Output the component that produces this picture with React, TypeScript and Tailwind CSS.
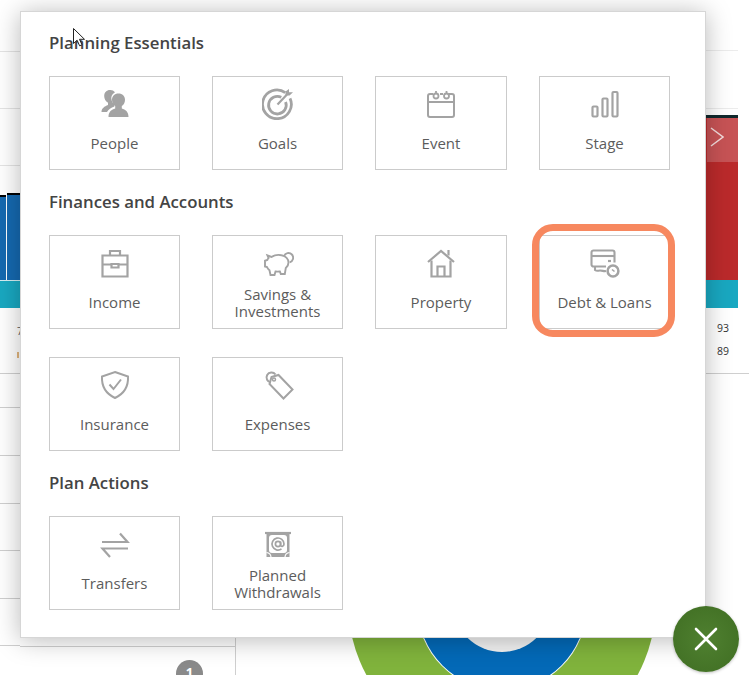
const line = 'stroke-[#a3a3a3]';

function Icon({ children }: { children: React.ReactNode }) {
  return (
    <svg viewBox="0 0 32 32" className={`h-8 w-8 shrink-0 fill-none ${line}`} strokeWidth="2">
      {children}
    </svg>
  );
}

const icons: Record<string, React.ReactNode> = {
  people: (
    <g fill="#a3a3a3" stroke="none">
      <path d="M11 2a6 6 0 0 1 5 2.2 7.2 7.2 0 0 0-3.2 8.6c.6 1.8 1.6 3 2.6 3.8v1.8c-3.4 1-6 3-7.400 5.600H2.500c0-3.400 3-5.600 6.500-6.900v-2.300C6.600 13.300 5.200 11 5.200 8 5.200 4.400 7.600 2 11 2z" />
      <path d="M19.500 5.500c3.900 0 6.500 2.700 6.500 6.300 0 2.800-1.300 5-3.200 6.300v2.500c3.500 1.100 6.700 3 6.700 8.400H9.500c0-5.400 3.200-7.300 6.700-8.400v-2.500C14.300 16.800 13 14.600 13 11.800c0-3.600 2.600-6.300 6.500-6.300z" />
    </g>
  ),
  goals: (
    <g>
      <path d="M23.300 4.600A14.400 14.400 0 1 0 28 10.300" strokeWidth="2.800" />
      <path d="M19.300 9.300A8.800 8.800 0 1 0 23.600 14" strokeWidth="2.800" />
      <path d="M15.500 16.500 25 6.500" strokeWidth="2.200" />
      <path d="M23.500 7.500V3.500L27 1v3.300L31 4.300 27.500 7.500z" fill="#a3a3a3" stroke="none" />
    </g>
  ),
  event: (
    <g>
      <path d="M8 6H5a2 2 0 0 0-2 2v19a2 2 0 0 0 2 2h22a2 2 0 0 0 2-2V8a2 2 0 0 0-2-2h-3M15 6h3" />
      <path d="M3 14h26" />
      <circle cx="11" cy="8" r="2.500" strokeWidth="1.800" />
      <circle cx="21.500" cy="8" r="2.500" strokeWidth="1.800" />
      <path d="M11 5.500V3M21.500 5.500V3" strokeWidth="1.800" />
    </g>
  ),
  stage: (
    <g strokeWidth="2.200">
      <rect x="3.500" y="18.500" width="5" height="10" rx="1" />
      <rect x="13.500" y="10.500" width="5" height="18" rx="1" />
      <rect x="23.500" y="4" width="5" height="24.500" rx="1" />
    </g>
  ),
  income: (
    <g strokeWidth="2.200">
      <path d="M3.500 8.500h25v21h-25z" />
      <path d="M11 8.500V4h10v4.500" />
      <path d="M3.500 17.500h9M19.500 17.500h9" />
      <path d="M12.500 17h7v3.500h-7z" />
    </g>
  ),
  savings: (
    <g strokeWidth="1.900">
      <path d="M5.500 8.500 9.500 10c2.600-1.800 6.300-2.600 10-1.800 4.200.8 7 3.800 7 7.300 0 2.300-1 4-2.700 5.400L22.800 27h-4l-.9-2.500c-1.500.2-3 .2-4.400 0L12.500 28h-4l-1-4.800c-1.200-.9-2-1.900-2.500-3.200L3 19.500v-5.700l2.300-.8c.4-.8.8-1.400 1.300-2z" />
      <path d="M22 9.300a4.700 4.700 0 1 1 5.700 6" />
    </g>
  ),
  property: (
    <g strokeWidth="2.200">
      <path d="M3 15 16 4l13 11" />
      <path d="M6.500 13.500V29.500h19V13.500" />
      <path d="M12.500 29V19.500h7V29" />
      <path d="M23.500 8.500V3" />
    </g>
  ),
  debt: (
    <g strokeWidth="2.100">
      <path d="M17 19.500H4.500a2 2 0 0 1-2-2V5.500a2 2 0 0 1 2-2h19a2 2 0 0 1 2 2v10" />
      <path d="M2.500 9h23" />
      <path d="M19 14h3" strokeWidth="2.200" />
      <path d="M6 20v3c2 1.500 3 .5 5 .5 2.500 0 4 1 6 .5" />
      <circle cx="24" cy="24" r="5.400" strokeWidth="2.500" />
      <path d="m23 22.500 2.500 2" strokeWidth="1.600" />
    </g>
  ),
  insurance: (
    <g strokeWidth="2">
      <path d="M16 3 29 7.500c.500 9.500-2.500 16.500-13 21.500C5.500 24 2.500 17 3 7.500z" />
      <path d="m10.500 15.500 4 4.500 7.500-9.500" />
    </g>
  ),
  expenses: (
    <g strokeWidth="2">
      <path d="m9.500 8 7-2 14 14.500-9 9L7.500 15z" />
      <path d="M9 13.500A5 5 0 1 1 13.500 5.500" />
      <circle cx="12" cy="10.500" r="1.500" strokeWidth="1.500" />
    </g>
  ),
  transfers: (
    <g strokeWidth="2.200">
      <path d="M3 14h25.500L21 5.500" />
      <path d="M29 20.500H3.500L11 29" />
    </g>
  ),
  withdrawals: (
    <g>
      <path d="M3 5h26" strokeWidth="2.200" />
      <path d="M4.500 5.500h23V29h-23z" fill="#a3a3a3" stroke="none" />
      <rect x="7" y="7" width="18" height="18" rx="3" fill="#fff" stroke="none" />
      <path d="M9 29a5 5 0 0 0 -4.500-4.500M23 29a5 5 0 0 1 4.500-4.500" stroke="#fff" strokeWidth="1.200" />
      <circle cx="16" cy="16" r="2.600" strokeWidth="1.700" />
      <path d="M18.600 13.500V17c0 2 3.400 2 3.400-1a6 6 0 1 0-2.500 4.900" strokeWidth="1.700" />
    </g>
  ),
};

function Tile({ icon, label, marked }: { icon: string; label: React.ReactNode; marked?: boolean }) {
  return (
    <div className="relative flex h-[94px] flex-col items-center border border-[#cbcbcb] bg-white pt-[11px]">
      <Icon>{icons[icon]}</Icon>
      <div className="flex flex-1 items-center pb-[2px] text-center text-[15px] leading-[17px] text-[#5c5c5c]">{label}</div>
      {marked && (
        <div className="absolute -bottom-[9px] -left-[8px] -right-[6px] -top-[12px] rounded-[21px] border-[7px] border-[#f7885f]" />
      )}
    </div>
  );
}

function Section({ title, children }: { title: string; children: React.ReactNode }) {
  return (
    <div>
      <h2 className="mb-[21px] h-6 text-[16.800px] font-semibold leading-6 text-[#444]">{title}</h2>
      <div className="grid grid-cols-[131px_131px_132px_131px] gap-x-[32px] gap-y-[28px]">{children}</div>
    </div>
  );
}

function LeftEdge() {
  return (
    <div className="flex w-5 shrink-0 flex-col">
      <div className="h-[52px] border-b border-[#e4e4e4]" />
      <div className="h-[57px] border-b border-[#e4e4e4]" />
      <div className="h-[57px] border-b border-[#e4e4e4]" />
      <div className="h-[27px]" />
      <div className="flex h-[87px] items-end gap-px">
        <div className="h-[85px] w-[6px] border-t-2 border-black bg-[#1569b0]" />
        <div className="h-[87px] w-[13px] border-t-2 border-black bg-[#1569b0]" />
      </div>
      <div className="h-[28px] border-t border-[#d6eef2] bg-[#19a8c1]" />
      <div className="flex h-[66px] flex-col border-b border-[#cfcfcf] pl-[17px] pt-[12px] text-[10px] leading-[23px] text-[#555]">
        <span>7</span>
        <span className="mt-[9px] h-[6px] w-[2px] bg-[#e2b67e]" />
      </div>
      <div className="h-[34px] border-b border-[#cfcfcf]" />
      <div className="h-[48px] border-b border-[#cfcfcf]" />
      <div className="h-[48px] border-b border-[#cfcfcf]" />
      <div className="h-[47px] border-b border-[#cfcfcf]" />
      <div className="h-[48px] border-b border-[#cfcfcf]" />
      <div className="h-[47px] border-b border-[#cfcfcf]" />
    </div>
  );
}

function RightEdge() {
  return (
    <div className="flex w-[43px] shrink-0 flex-col">
      <div className="h-[51px] w-[32px] border-b border-[#ececec]" />
      <div className="h-[58px] w-[32px] border-b border-[#ececec]" />
      <div className="h-[6px]" />
      <div className="h-[3px] w-[32px] bg-[#10282c]" />
      <div className="flex h-[162px] w-[32px] flex-col bg-[#bb2a2b] pl-px">
        <div className="flex h-[44px] items-start bg-[#c75355] pl-[3px] pt-[9px]">
          <svg viewBox="0 0 14 20" className="h-5 w-[14px] fill-none stroke-[#f3dcdc]" strokeWidth="1.500">
            <path d="M1 1 13 10 1 19" />
          </svg>
        </div>
      </div>
      <div className="h-[28px] w-[32px] bg-[#19a8c1]" />
      <div className="flex h-[66px] flex-col border-b border-[#cfcfcf] pl-[11px] pt-[9px] text-[10.500px] leading-[23px] text-[#333]">
        <span>93</span>
        <span>89</span>
      </div>
    </div>
  );
}

function BottomStrip() {
  return (
    <div className="flex h-[37px] shrink-0">
      <div className="w-[216px] shrink-0 border-r border-[#cfcfcf] pt-[8px]">
        <div className="flex justify-end border-t border-[#cfcfcf] pr-[32px] pt-[13px]">
          <div className="flex h-[27px] w-[27px] justify-center rounded-full bg-[#8a8a8a] text-[13px] font-bold leading-[25px] text-white">
            1
          </div>
        </div>
      </div>
      <svg viewBox="236 638 470 37" className="h-[37px] w-[470px] shrink-0">
        <circle cx="502" cy="602" r="154" fill="#80b33c" />
        <circle cx="502" cy="606" r="85" fill="#fff" />
        <circle cx="502" cy="606" r="84" fill="#0369b7" />
        <circle cx="502" cy="603" r="49" fill="#f2f2f2" />
      </svg>
    </div>
  );
}

export default function App() {
  return (
    <div className="relative flex h-[675px] w-[749px] overflow-hidden bg-white font-['Open_Sans',sans-serif]">
      <LeftEdge />
      <div className="flex w-[686px] shrink-0 flex-col justify-end">
        <BottomStrip />
      </div>
      <RightEdge />

      <div className="absolute left-5 top-[11px] flex h-[627px] w-[686px] flex-col gap-5 border border-[#d6d6d6] bg-white pl-[28px] pt-[19px] shadow-[0_2px_24px_rgba(0,0,0,0.28)]">
        <Section title="Planning Essentials">
          <Tile icon="people" label="People" />
          <Tile icon="goals" label="Goals" />
          <Tile icon="event" label="Event" />
          <Tile icon="stage" label="Stage" />
        </Section>
        <Section title="Finances and Accounts">
          <Tile icon="income" label="Income" />
          <Tile icon="savings" label={<>Savings &amp;<br />Investments</>} />
          <Tile icon="property" label="Property" />
          <Tile icon="debt" label="Debt & Loans" marked />
          <Tile icon="insurance" label="Insurance" />
          <Tile icon="expenses" label="Expenses" />
        </Section>
        <Section title="Plan Actions">
          <Tile icon="transfers" label="Transfers" />
          <Tile icon="withdrawals" label={<>Planned<br />Withdrawals</>} />
        </Section>
      </div>

      {/* pointer left in the capture */}
      <svg viewBox="0 0 14 20" className="absolute left-[73px] top-[28px] h-5 w-[14px]">
        <path d="M.5.5v15l3.600-3.300 2.500 5.600 2.400-1-2.500-5.500h5z" fill="#fff" stroke="#222" strokeWidth="1" />
      </svg>

      <button className="absolute left-[673px] top-[606px] flex h-[66px] w-[66px] items-center justify-center rounded-full bg-[radial-gradient(circle,#4f8030_0%,#3f6d22_100%)] shadow-[0_1px_3px_rgba(0,0,0,0.25)]">
        <svg viewBox="0 0 24 24" className="h-6 w-6 fill-none stroke-white" strokeWidth="2.600" strokeLinecap="round">
          <path d="M2 2l20 20M22 2 2 22" />
        </svg>
      </button>
    </div>
  );
}
